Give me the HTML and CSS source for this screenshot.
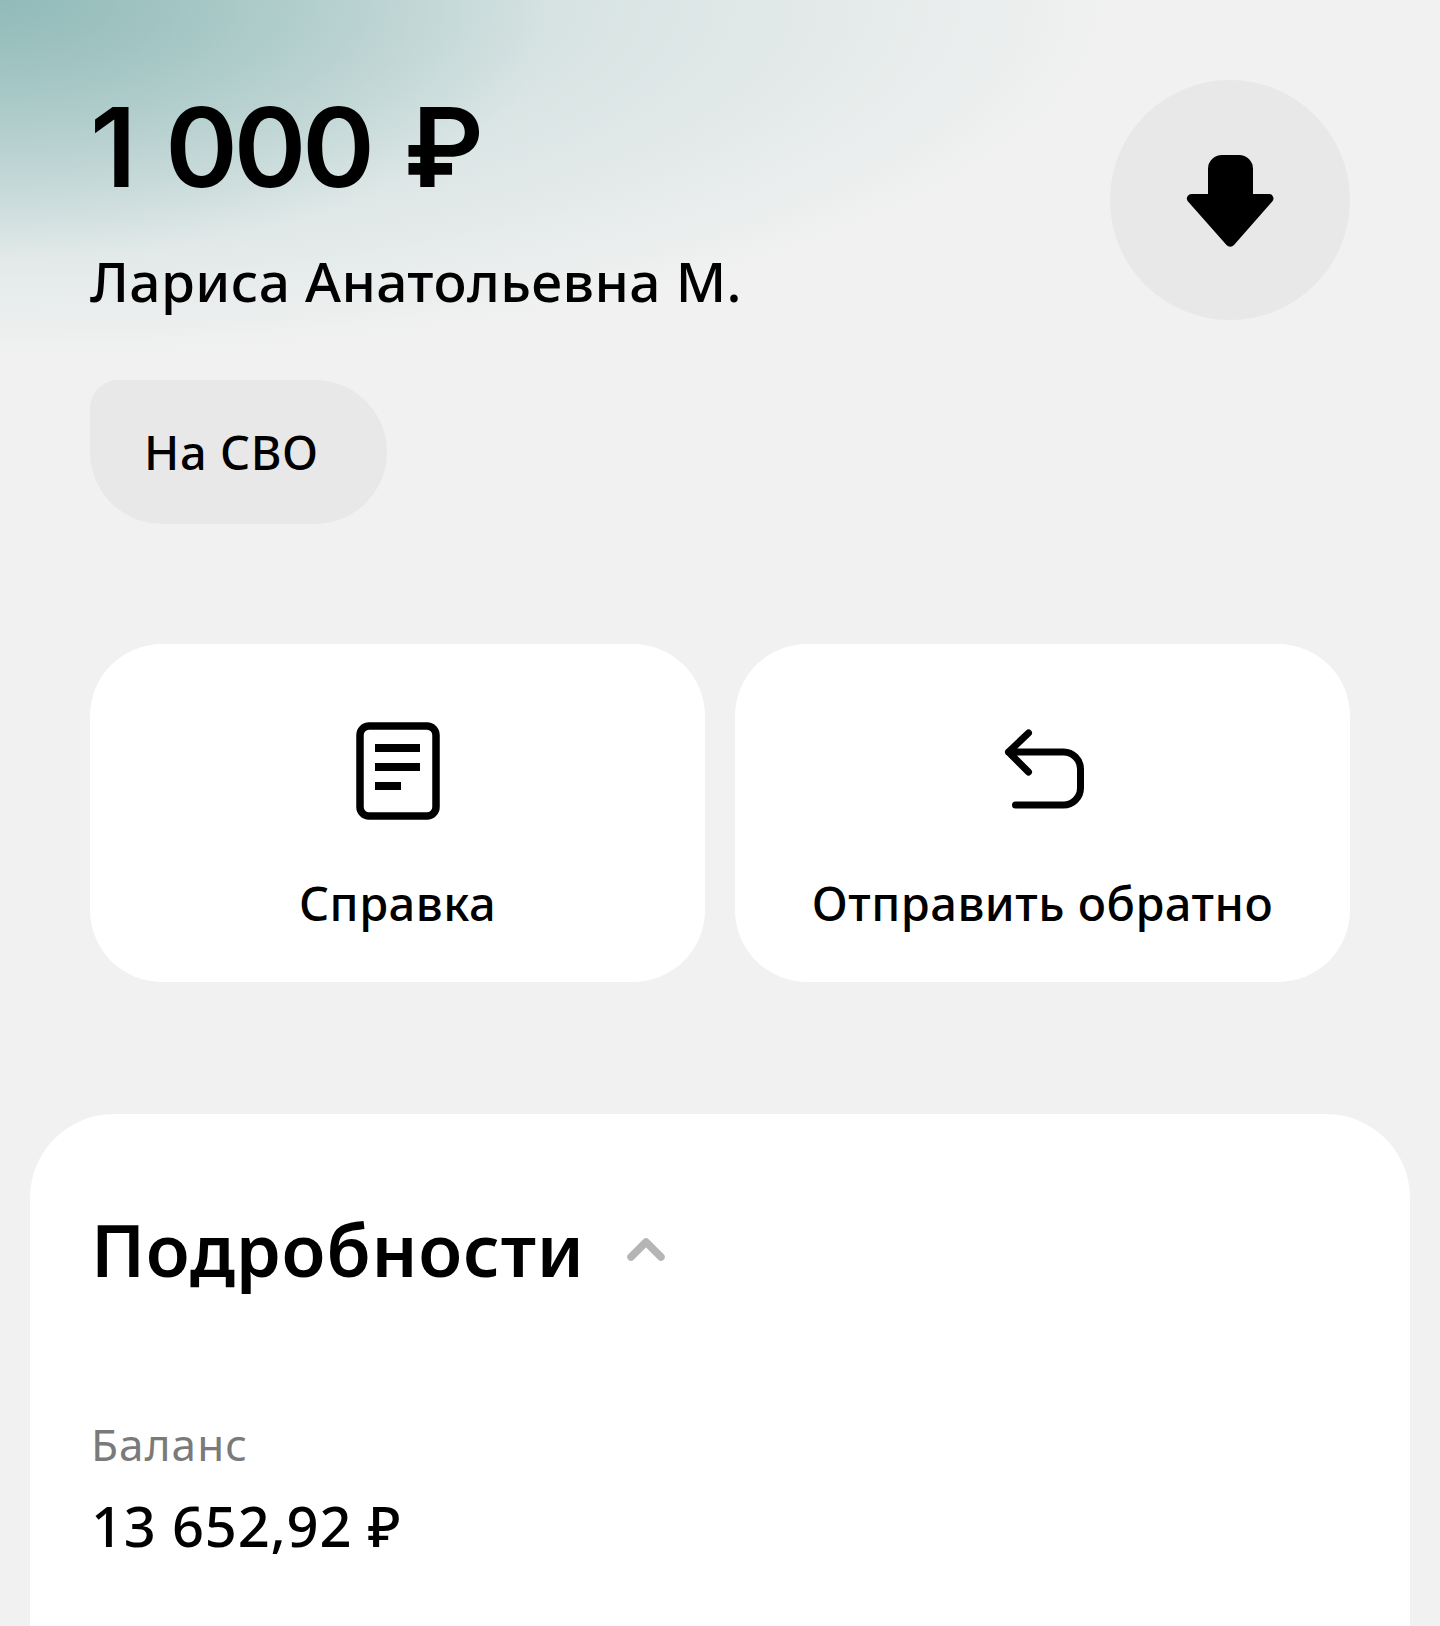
FILE: index.html
```html
<!DOCTYPE html>
<html lang="ru">
<head>
  <meta charset="UTF-8">
  <meta name="viewport" content="width=device-width, initial-scale=1.0">
  <title>Перевод</title>
  <link rel="stylesheet" href="styles.css">
</head>
<body>
  <div class="page">
    <header class="summary">
      <div class="summary-text">
        <div class="amount">1 000 ₽</div>
        <div class="sender">Лариса Анатольевна М.</div>
      </div>
      <div class="direction">
        <svg class="direction-icon" width="88" height="94" viewBox="0 0 88 94">
          <path d="M22 15a14 14 0 0 1 14-14h17a14 14 0 0 1 14 14v25h16a4.500 4.500 0 0 1 3.300 7.500L48 91a5 5 0 0 1-7.500 0L2 47.500A4.500 4.500 0 0 1 5.300 40H22z" fill="#000"/>
        </svg>
      </div>
    </header>

    <div class="tag">На СВО</div>

    <div class="actions">
      <div class="action">
        <svg class="action-icon" width="84" height="98" viewBox="0 0 84 98" fill="none" stroke="#000">
          <rect x="4" y="4" width="76" height="90" rx="9" stroke-width="7.500"/>
          <path d="M19 26h45M19 45h45M19 64h26" stroke-width="8"/>
        </svg>
        <span class="action-label">Справка</span>
      </div>
      <div class="action">
        <svg class="action-icon" width="84" height="98" viewBox="0 0 84 98" fill="none" stroke="#000" stroke-width="7" stroke-linecap="round" stroke-linejoin="round">
          <path d="M27.500 11 7.500 30l20 20M7.500 30h55a17 17 0 0 1 17 17v19a17 17 0 0 1-17 17H14.500"/>
        </svg>
        <span class="action-label">Отправить обратно</span>
      </div>
    </div>

    <section class="details">
      <div class="details-head">
        <h2 class="details-title">Подробности</h2>
        <svg width="38" height="26" viewBox="0 0 38 26" fill="none" stroke="#b5b5b5" stroke-width="7.500" stroke-linecap="round" stroke-linejoin="round">
          <path d="M4 21 19 6l15 15"/>
        </svg>
      </div>
      <div class="details-label">Баланс</div>
      <div class="details-value">13 652,92 ₽</div>
    </section>
  </div>
</body>
</html>
```

FILE: styles.css
```css
* {
  box-sizing: border-box;
}

html,
body {
  margin: 0;
  height: 100%;
}

body {
  font-family: "Noto Sans", sans-serif;
  color: #000;
  background-color: #f1f1f1;
  overflow: hidden;
}

.page {
  display: flex;
  flex-direction: column;
  height: 100%;
  background-color: #f1f1f1;
  background-image:
    radial-gradient(ellipse 560px 260px at 0 0, rgba(134, 180, 178, 0.8), rgba(134, 180, 178, 0) 100%),
    radial-gradient(ellipse 1120px 360px at 0 0, rgba(176, 207, 205, 0.8), rgba(176, 207, 205, 0) 100%);
  background-repeat: no-repeat;
}

.summary {
  display: flex;
  justify-content: space-between;
  align-items: flex-start;
  padding: 80px 90px 0 90px;
}

.amount {
  padding-top: 5px;
  font-family: "Inter", sans-serif;
  font-size: 110px;
  font-weight: 600;
  line-height: 125px;
  letter-spacing: -4px;
  word-spacing: 9px;
}

.sender {
  margin-top: 34px;
  font-size: 55px;
  font-weight: 500;
  line-height: 74px;
  letter-spacing: 0.4px;
}

.direction {
  display: flex;
  align-items: center;
  justify-content: center;
  width: 240px;
  height: 240px;
  border-radius: 50%;
  background-color: #e8e8e8;
}

.direction-icon {
  margin-top: 2px;
}

.tag {
  display: flex;
  align-items: center;
  align-self: flex-start;
  height: 144px;
  margin: 60px 0 0 90px;
  padding: 0 68px 0 54px;
  font-size: 47px;
  font-weight: 500;
  letter-spacing: 0.6px;
  background-color: #e8e8e8;
  border-radius: 28px 72px 72px 72px;
}

.actions {
  display: grid;
  grid-template-columns: 1fr 1fr;
  gap: 30px;
  margin: 120px 90px 0;
}

.action {
  display: flex;
  flex-direction: column;
  align-items: center;
  height: 338px;
  padding-top: 78px;
  background-color: #fff;
  border-radius: 72px;
}

.action-label {
  margin-top: 52px;
  font-size: 47px;
  font-weight: 500;
  line-height: 62px;
  letter-spacing: 0.5px;
}

.details {
  flex: 1;
  margin: 132px 30px 0;
  padding: 86px 61px 0;
  background-color: #fff;
  border-radius: 84px 84px 0 0;
}

.details-head {
  display: flex;
  align-items: center;
  gap: 42px;
}

.details-title {
  margin: 0;
  font-size: 72px;
  font-weight: 600;
  line-height: 98px;
  letter-spacing: 0.8px;
}

.details-label {
  margin-top: 117px;
  font-size: 44px;
  line-height: 58px;
  letter-spacing: 1.1px;
  color: #7a7a7a;
}

.details-value {
  margin-top: 16px;
  font-size: 56px;
  font-weight: 500;
  line-height: 72px;
  letter-spacing: 0.8px;
}
```
